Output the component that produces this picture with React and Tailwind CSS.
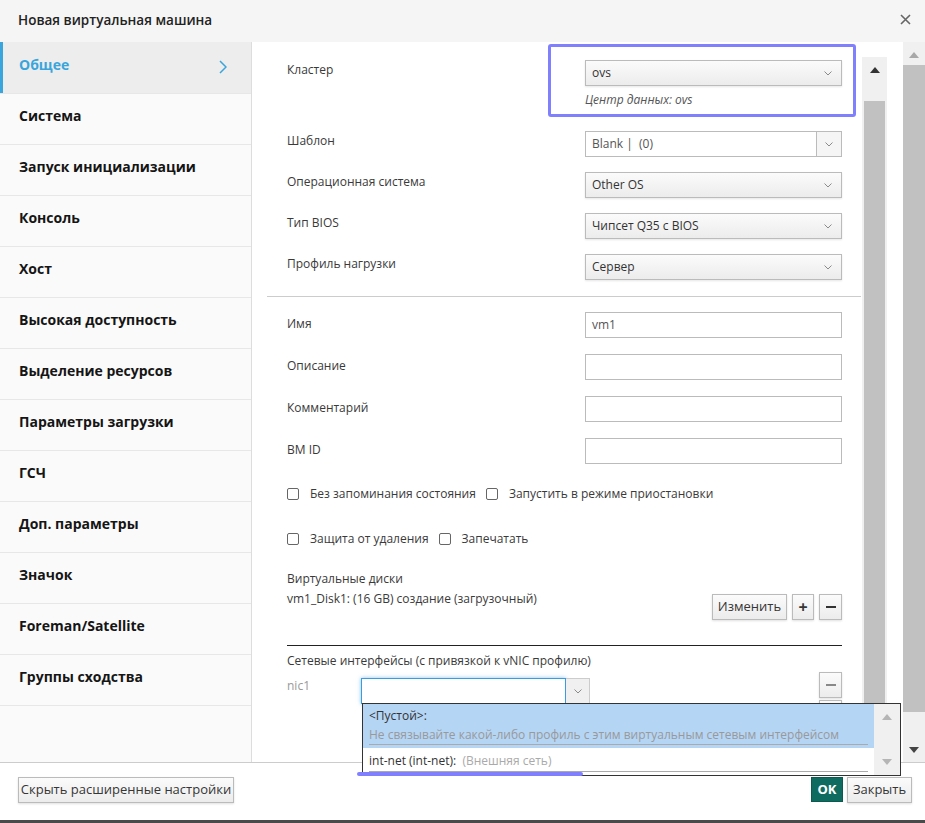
const Chevron = ({ className = '' }) => (
  <svg width="8" height="5" viewBox="0 0 8 5" className={className}>
    <path d="M0.5 0.5 L4 4 L7.5 0.5" fill="none" stroke="#8a8a8a" strokeWidth="1" />
  </svg>
)

const Select = ({ value }) => (
  <div className="flex h-[26px] w-[257px] items-center justify-between border border-[#bbb] bg-linear-to-b from-[#fbfbfb] to-[#ececec] pl-[6px] pr-[9px] text-[12px] text-[#333] shadow-[0_1px_2px_rgba(0,0,0,0.1)]">
    <span>{value}</span>
    <Chevron />
  </div>
)

const Input = ({ value = '' }) => (
  <div className="flex h-[26px] w-[257px] items-center border border-[#bbb] bg-white px-[6px] text-[12px] text-[#555]">
    {value}
  </div>
)

const Row = ({ label, children, className = '', pad = '' }) => (
  <div className={`flex items-start justify-between ${className}`}>
    <span className={`text-[12px] leading-[20px] text-[#3a3a3a] ${pad}`}>{label}</span>
    {children}
  </div>
)

const Check = ({ label }) => (
  <div className="flex items-center">
    <span className="h-[12px] w-[12px] rounded-[2px] border border-[#666] bg-white" />
    <span className="ml-[11px] text-[12px] text-[#3a3a3a]">{label}</span>
  </div>
)

const Btn = ({ children, className = '' }) => (
  <div className={`flex h-[26px] items-center justify-center border border-[#bbb] bg-linear-to-b from-[#fbfbfb] to-[#ececec] text-[13px] text-[#363636] shadow-[0_1px_2px_rgba(0,0,0,0.12)] ${className}`}>
    {children}
  </div>
)

const Arrow = ({ up, color }) => (
  <svg width="10" height="6" viewBox="0 0 10 6">
    <path d={up ? 'M0 6 L5 0 L10 6 Z' : 'M0 0 L5 6 L10 0 Z'} fill={color} />
  </svg>
)

const menu = [
  'Общее',
  'Система',
  'Запуск инициализации',
  'Консоль',
  'Хост',
  'Высокая доступность',
  'Выделение ресурсов',
  'Параметры загрузки',
  'ГСЧ',
  'Доп. параметры',
  'Значок',
  'Foreman/Satellite',
  'Группы сходства',
]

export default function App() {
  return (
    <div className="relative flex h-[823px] w-[925px] flex-col overflow-hidden bg-white font-['Open_Sans',sans-serif]">
      {/* header */}
      <div className="flex h-[42px] items-center justify-between bg-[#f5f5f5] pl-[18px] pr-[14px]">
        <span className="pb-[2px] text-[13.5px] font-semibold text-[#222]">Новая виртуальная машина</span>
        <svg width="11" height="11" viewBox="0 0 11 11" className="mb-[3px]">
          <path d="M1 1 L10 10 M10 1 L1 10" stroke="#666" strokeWidth="1.6" />
        </svg>
      </div>

      {/* body */}
      <div className="flex h-[720px]">
        <div className="w-[252px] border-r border-[#ddd] bg-[#fafafa]">
          {menu.map((item, i) =>
            i === 0 ? (
              <div key={item} className="flex h-[51px] items-center border-l-[3px] border-[#39a5dc] bg-[#ededed] pb-[6px] pl-[16px] pr-[24px]">
                <span className="text-[14px] font-bold text-[#39a5dc]">{item}</span>
                <svg width="8" height="14" viewBox="0 0 8 14" className="ml-auto mt-[4px]">
                  <path d="M1 1 L7 7 L1 13" fill="none" stroke="#39a5dc" strokeWidth="1.5" />
                </svg>
              </div>
            ) : (
              <div key={item} className="flex h-[51px] items-center border-t border-[#e7e7e7] pb-[7px] pl-[19px]">
                <span className="text-[14px] font-bold text-[#151515]">{item}</span>
              </div>
            )
          )}
          <div className="border-t border-[#e7e7e7]" />
        </div>

        {/* form */}
        <div className="w-[610px] overflow-hidden pl-[35px] pr-[20px] pt-[2px]">
          <div className="flex items-start justify-between">
            <span className="pt-[16px] text-[12px] leading-[20px] text-[#3a3a3a]">Кластер</span>
            <div className="-mr-[14px] h-[73px] w-[308px] rounded-[3px] border-[3px] border-[#8080ff] pl-[34px] pr-[11px] pt-[13px]">
              <Select value="ovs" />
              <div className="mt-[5px] text-[12px] italic text-[#555]">Центр данных: ovs</div>
            </div>
          </div>

          <Row label="Шаблон" className="mt-[14px]">
            <div className="flex h-[26px] w-[257px] border border-[#bbb] bg-white text-[12px] text-[#555]">
              <span className="flex flex-1 items-center pl-[6px]">Blank |&nbsp; (0)</span>
              <span className="flex w-[25px] items-center justify-center border-l border-[#bbb] bg-[#f5f5f5]">
                <Chevron />
              </span>
            </div>
          </Row>
          <Row label="Операционная система" className="mt-[15px]">
            <Select value="Other OS" />
          </Row>
          <Row label="Тип BIOS" className="mt-[15px]">
            <Select value="Чипсет Q35 с BIOS" />
          </Row>
          <Row label="Профиль нагрузки" className="mt-[15px]">
            <Select value="Сервер" />
          </Row>

          <div className="-ml-[20px] -mr-[19px] mt-[16px] border-t border-[#ccc]" />

          <Row label="Имя" className="mt-[15px]" pad="pt-[2px]">
            <Input value="vm1" />
          </Row>
          <Row label="Описание" className="mt-[16px]" pad="pt-[2px]">
            <Input />
          </Row>
          <Row label="Комментарий" className="mt-[16px]" pad="pt-[2px]">
            <Input />
          </Row>
          <Row label="ВМ ID" className="mt-[16px]" pad="pt-[2px]">
            <Input />
          </Row>

          <div className="mt-[20px] flex h-[20px] items-center gap-[10px]">
            <Check label="Без запоминания состояния" />
            <Check label="Запустить в режиме приостановки" />
          </div>
          <div className="mt-[25px] flex h-[20px] items-center gap-[10px]">
            <Check label="Защита от удаления" />
            <Check label="Запечатать" />
          </div>

          <div className="mt-[20px] flex justify-between">
            <div className="text-[12px] leading-[20px] text-[#3a3a3a]">
              <div>Виртуальные диски</div>
              <div>vm1_Disk1: (16 GB) создание (загрузочный)</div>
            </div>
            <div className="mt-[25px] flex gap-[5px]">
              <Btn className="w-[75px]">Изменить</Btn>
              <Btn className="w-[22px] text-[16px] font-bold">+</Btn>
              <Btn className="w-[23px]">
                <span className="h-[2px] w-[10px] bg-[#333]" />
              </Btn>
            </div>
          </div>

          <div className="mt-[25px] border-t border-[#222]" />
          <div className="mt-[5px] text-[12px] leading-[20px] text-[#3a3a3a]">
            Сетевые интерфейсы (с привязкой к vNIC профилю)
          </div>
          <div className="mt-[1px] flex items-start">
            <span className="w-[74px] pt-[4px] text-[12px] leading-[20px] text-[#999]">nic1</span>
            <div className="mt-[6px] flex h-[26px]">
              <div className="w-[205px] border border-[#3a9be0] bg-white shadow-[0_0_4px_rgba(58,155,224,0.6)]" />
              <div className="flex w-[24px] items-center justify-center border border-l-0 border-[#ccc] bg-[#f0f0f0]">
                <Chevron />
              </div>
            </div>
            <div className="ml-auto flex flex-col gap-[2px]">
              <Btn className="w-[23px]">
                <span className="h-[2px] w-[10px] bg-[#888]" />
              </Btn>
              <Btn className="w-[23px]" />
            </div>
          </div>
        </div>

        {/* inner scrollbar */}
        <div className="mt-[15px] flex w-[25px] flex-col items-center bg-[#f0f0f0]">
          <div className="flex h-[44px] items-start pt-[10px]">
            <Arrow up color="#333" />
          </div>
          <div className="w-[21px] flex-1 bg-[#c1c1c1]" />
        </div>
        <div className="w-[16px]" />

        {/* outer scrollbar */}
        <div className="flex w-[22px] flex-col items-center bg-[#f0f0f0]">
          <div className="flex h-[23px] items-center pt-[2px]">
            <Arrow up color="#a8a8a8" />
          </div>
          <div className="h-[647px] w-full bg-[#c1c1c1]" />
          <div className="flex flex-1 items-end pb-[9px]">
            <Arrow color="#444" />
          </div>
        </div>
      </div>

      {/* footer */}
      <div className="flex h-[58px] items-start justify-between border-t border-[#ccc] bg-white pl-[18px] pr-[13px] pt-[14px]">
        <Btn className="w-[216px] text-[#444]">Скрыть расширенные настройки</Btn>
        <div className="flex gap-[4px]">
          <div className="flex h-[25px] w-[32px] items-center justify-center border border-[#0b5a50] bg-[#0f6b5f] text-[13px] font-bold text-white">
            OK
          </div>
          <Btn className="w-[65px] text-[#444]">Закрыть</Btn>
        </div>
      </div>
      <div className="h-[3px] bg-[#4a4a4a]" />

      {/* dropdown popup */}
      <div className="absolute left-[362px] top-[703px] flex h-[73px] w-[539px] border border-[#333] bg-white">
        <div className="flex-1">
          <div className="h-[44px] bg-[#b5d5f5] px-[6px] pt-[3px]">
            <div className="text-[12px] leading-[18px] text-[#333]">&lt;Пустой&gt;:</div>
            <div className="border-b border-[#aaa] text-[12px] leading-[19px] text-[#999]">
              Не связывайте какой-либо профиль с этим виртуальным сетевым интерфейсом
            </div>
          </div>
          <div className="px-[6px] pt-[3px]">
            <div className="border-b border-[#aaa] text-[12px] leading-[20px] text-[#333]">
              int-net (int-net):&nbsp;&nbsp;<span className="text-[#aaa]">(Внешняя сеть)</span>
            </div>
          </div>
        </div>
        <div className="flex w-[26px] flex-col items-center justify-between bg-[#f0f0f0] py-[10px]">
          <Arrow up color="#b5b5b5" />
          <Arrow color="#b5b5b5" />
        </div>
      </div>
      <div className="absolute left-[357px] top-[772px] h-[4px] w-[226px] rounded-full bg-[#8080ff]" />
    </div>
  )
}
